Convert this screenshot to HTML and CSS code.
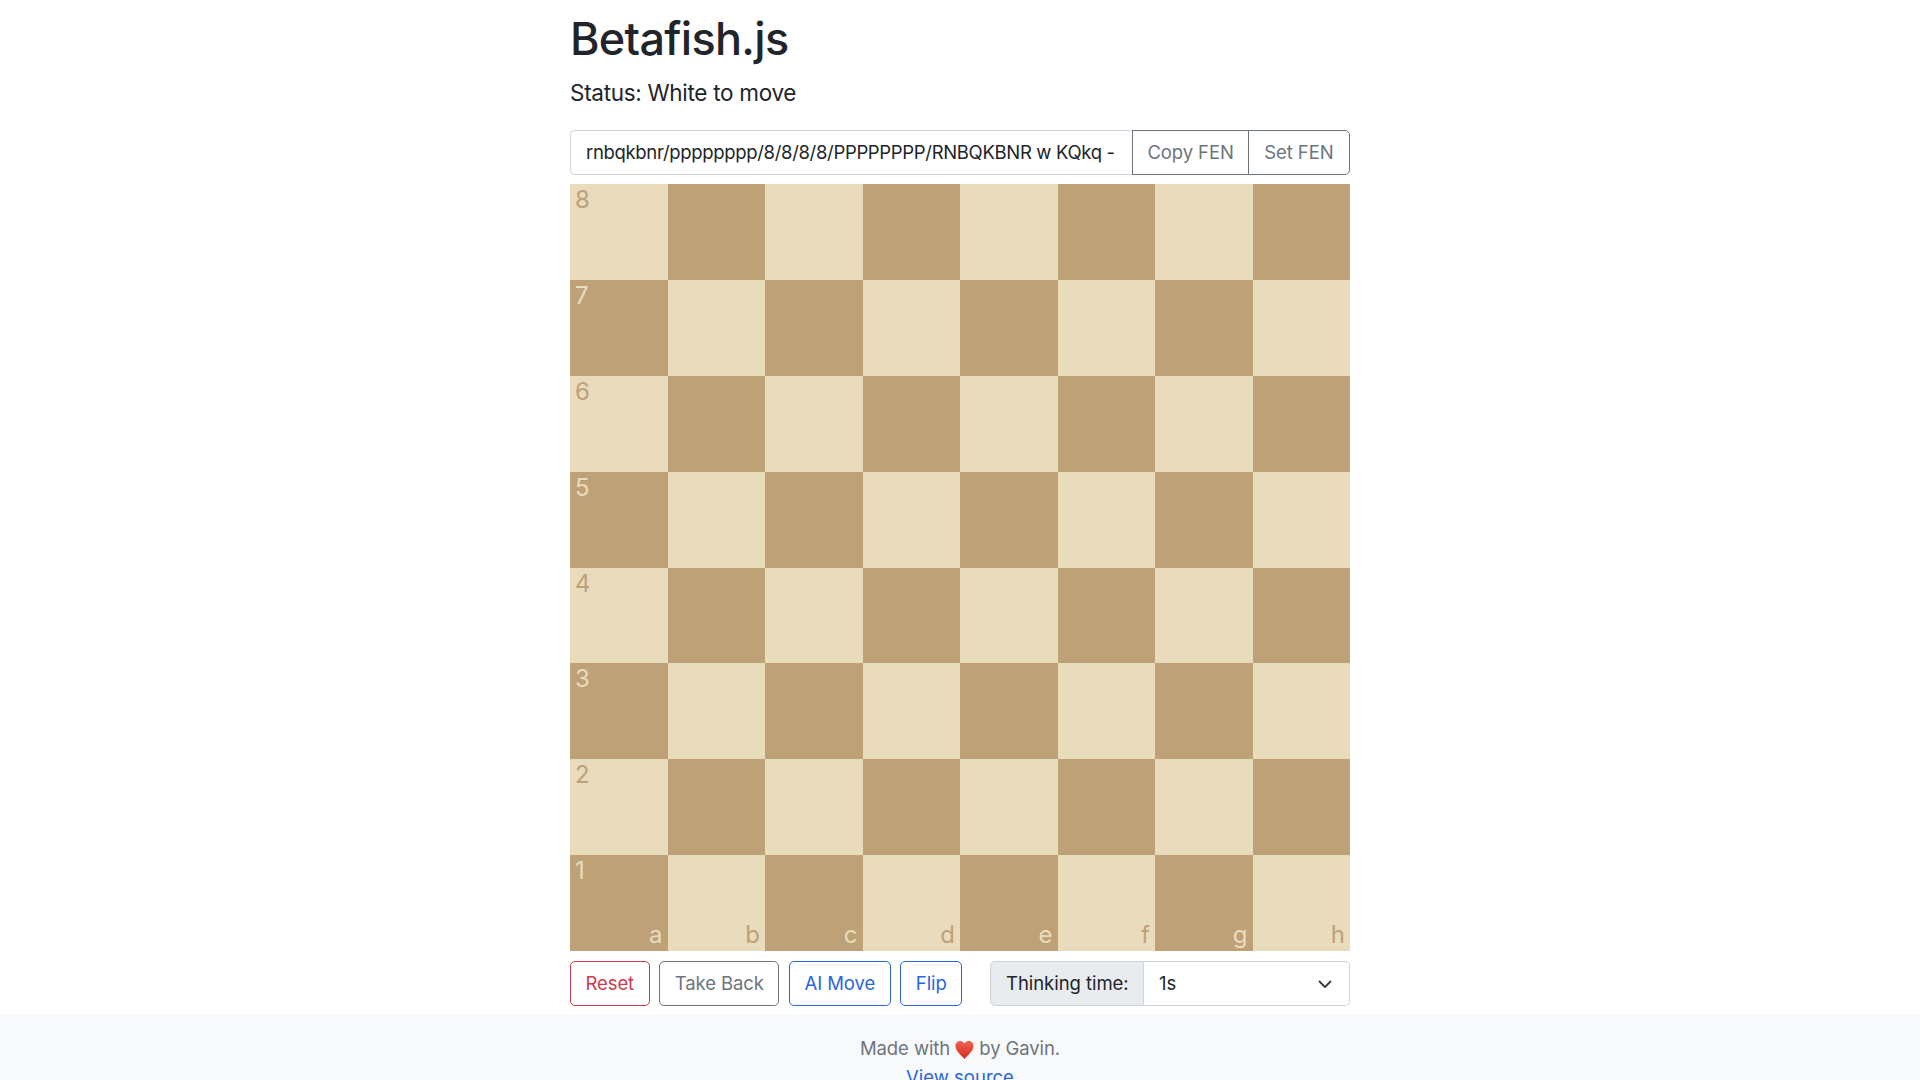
FILE: index.html
```html
<!DOCTYPE html>
<html lang="en">
<head>
<meta charset="utf-8">
<title>Betafish.js</title>
<link rel="stylesheet" href="styles.css">
</head>
<body>
<main class="container">
  <h1 class="title">Betafish.js</h1>
  <p class="status">Status: White to move</p>
  <div class="fen-group">
    <div class="fen-input">rnbqkbnr/pppppppp/8/8/8/8/PPPPPPPP/RNBQKBNR w KQkq -</div>
    <button class="btn btn-fen btn-grey">Copy FEN</button>
    <button class="btn btn-fen btn-grey btn-last">Set FEN</button>
  </div>
  <div class="board">
    <div class="sq l"><span class="rank">8</span></div><div class="sq d"></div><div class="sq l"></div><div class="sq d"></div><div class="sq l"></div><div class="sq d"></div><div class="sq l"></div><div class="sq d"></div>
    <div class="sq d"><span class="rank">7</span></div><div class="sq l"></div><div class="sq d"></div><div class="sq l"></div><div class="sq d"></div><div class="sq l"></div><div class="sq d"></div><div class="sq l"></div>
    <div class="sq l"><span class="rank">6</span></div><div class="sq d"></div><div class="sq l"></div><div class="sq d"></div><div class="sq l"></div><div class="sq d"></div><div class="sq l"></div><div class="sq d"></div>
    <div class="sq d"><span class="rank">5</span></div><div class="sq l"></div><div class="sq d"></div><div class="sq l"></div><div class="sq d"></div><div class="sq l"></div><div class="sq d"></div><div class="sq l"></div>
    <div class="sq l"><span class="rank">4</span></div><div class="sq d"></div><div class="sq l"></div><div class="sq d"></div><div class="sq l"></div><div class="sq d"></div><div class="sq l"></div><div class="sq d"></div>
    <div class="sq d"><span class="rank">3</span></div><div class="sq l"></div><div class="sq d"></div><div class="sq l"></div><div class="sq d"></div><div class="sq l"></div><div class="sq d"></div><div class="sq l"></div>
    <div class="sq l"><span class="rank">2</span></div><div class="sq d"></div><div class="sq l"></div><div class="sq d"></div><div class="sq l"></div><div class="sq d"></div><div class="sq l"></div><div class="sq d"></div>
    <div class="sq d"><span class="rank">1</span><span class="file">a</span></div><div class="sq l"><span class="file">b</span></div><div class="sq d"><span class="file">c</span></div><div class="sq l"><span class="file">d</span></div><div class="sq d"><span class="file">e</span></div><div class="sq l"><span class="file">f</span></div><div class="sq d"><span class="file">g</span></div><div class="sq l"><span class="file">h</span></div>
  </div>
  <div class="controls">
    <button class="btn btn-red">Reset</button>
    <button class="btn btn-grey">Take Back</button>
    <button class="btn btn-blue">AI Move</button>
    <button class="btn btn-blue">Flip</button>
    <div class="time-group">
      <span class="time-label">Thinking time:</span>
      <div class="time-select">
        <span>1s</span>
        <svg class="chevron" viewBox="0 0 16 16" width="16" height="16"><path fill="none" stroke="#343a40" stroke-linecap="round" stroke-linejoin="round" stroke-width="1.8" d="M2.500 5.500l5.500 5.500 5.500-5.500"/></svg>
      </div>
    </div>
  </div>
</main>
<footer class="footer">
  <div class="made">Made with <svg class="heart" viewBox="1 1.6 18 17.9" width="19" height="18"><defs><linearGradient id="hg" x1="0" y1="0" x2="0" y2="1"><stop offset="0" stop-color="#f0604f"/><stop offset="1" stop-color="#d62c20"/></linearGradient></defs><path fill="url(#hg)" d="M10 19.500C6.500 15.500 1 11.500 1 6.600 1 3.600 3.200 1.600 5.700 1.600c1.900 0 3.400 1 4.300 2.800.9-1.800 2.400-2.800 4.300-2.800C16.800 1.600 19 3.600 19 6.600c0 4.900-5.500 8.900-9 12.900z"/></svg> by Gavin.</div>
  <a class="source" href="#">View source</a>
</footer>
</body>
</html>
```
FILE: styles.css
```css
* { box-sizing: border-box; }
html, body { margin: 0; height: 1080px; overflow: hidden; }
body {
  font-family: Inter, "Liberation Sans", sans-serif;
  font-size: 19px;
  line-height: 1.5;
  color: #212529;
  background: #fff;
}
.container { width: 780px; margin: 0 auto; display: flex; flex-direction: column; height: 1015px; }
.title { margin: 8px 0 0; font-size: 45px; font-weight: 500; line-height: 62px; letter-spacing: -0.7px; }
.status { margin: 7px 0 0; font-size: 22.5px; line-height: 32px; letter-spacing: -0.3px; }
.fen-group { display: flex; height: 45px; margin-top: 21px; }
.fen-input {
  flex: 1; border: 1px solid #ced4da; border-right: 0; border-radius: 5px 0 0 5px;
  padding: 0 15px; display: flex; align-items: center; white-space: nowrap; overflow: hidden;
  font-size: 18.5px; letter-spacing: -0.33px;
}
.btn {
  font: inherit; font-size: 18.5px; letter-spacing: -0.1px; background: #fff; height: 45px; padding: 0 14.5px;
  border: 1px solid; border-radius: 5px; cursor: pointer; white-space: nowrap;
}
.btn-fen { border-radius: 0; margin-left: -1px; padding: 0 14px; }
.btn-fen.btn-last { border-radius: 0 5px 5px 0; padding: 0 15.5px; }
.btn-grey { color: #6c757d; border-color: #6c757d; }
.btn-red { color: #c93b4d; border-color: #c93b4d; }
.btn-blue { color: #2a66d9; border-color: #2a66d9; }
.board {
  margin-top: 9px; height: 767px; display: grid;
  grid-template-columns: repeat(8, 1fr); grid-template-rows: repeat(8, 1fr);
}
.sq { position: relative; font-size: 24px; line-height: 1; }
.l { background: #e8dcbd; color: #bfa178; }
.d { background: #bfa178; color: #e8dcbd; }
.rank { position: absolute; left: 5px; top: 4px; }
.file { position: absolute; right: 5px; bottom: 4px; }
.controls { display: flex; gap: 9.75px; margin-top: 10px; }
.time-group { display: flex; margin-left: auto; width: 360px; height: 45px; }
.time-label {
  background: #e9ecef; border: 1px solid #ced4da; border-radius: 5px 0 0 5px;
  padding: 0 14.5px 0 15px; display: flex; align-items: center; font-size: 18.5px; white-space: nowrap; letter-spacing: -0.05px;
}
.time-select {
  flex: 1; border: 1px solid #ced4da; border-left: 0; border-radius: 0 5px 5px 0;
  padding: 0 16px 0 15px; display: flex; align-items: center; justify-content: space-between; font-size: 18.5px;
}
.footer { background: #f8f9fa; height: 65px; text-align: center; color: #6c757d; font-size: 18.5px; padding-top: 17px; line-height: 32px; }
.made { height: 29px; letter-spacing: -0.1px; }
.heart { vertical-align: -4px; }
.source { color: #2a66d9; text-decoration: underline; display: block; }
```
